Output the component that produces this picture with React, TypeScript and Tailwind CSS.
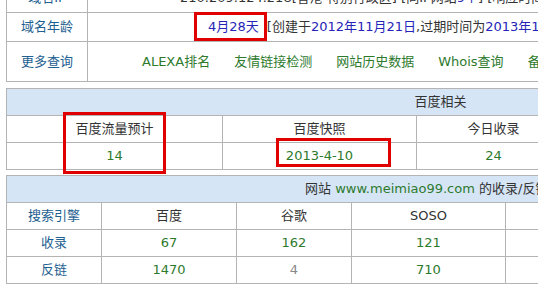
const line = 'border-[#b4b4b4]';

function Cell({ w, className = '', children }: { w?: string; className?: string; children?: React.ReactNode }) {
  return (
    <div className={`flex items-center justify-center whitespace-nowrap border-r border-[#b4b4b4] ${w ?? 'flex-1'} ${className}`}>
      {children}
    </div>
  );
}

function Label({ children }: { children: React.ReactNode }) {
  return <span className="text-[#1e6090]">{children}</span>;
}

function Green({ children }: { children: React.ReactNode }) {
  return <span className="text-[#2d7a2d]">{children}</span>;
}

function Blue({ children }: { children: React.ReactNode }) {
  return <span className="text-[#2525b8]">{children}</span>;
}

const links = ['ALEXA排名', '友情链接检测', '网站历史数据', 'Whois查询', '备案查询', 'PR查询'];

export default function App() {
  return (
    <div className="relative w-[538px] h-[284px] overflow-hidden bg-white text-[13px] leading-[16px] text-[#333] font-['DejaVu_Sans','Noto_Sans_CJK_SC',sans-serif]">
      <div className="-mt-[17px] ml-[6px] w-[869px]">
        {/* domain info */}
        <div className={`border-l border-t ${line}`}>
          <div className={`flex h-[29px] border-b ${line}`}>
            <Cell w="w-[81px]"><Label>域名IP</Label></Cell>
            <Cell className="!justify-start pl-[92px]">
              210.209.124.218[香港 特别行政区] [同IP网站<Blue>9个</Blue>] [响应时间:120ms]
            </Cell>
          </div>
          <div className={`flex h-[29px] border-b ${line}`}>
            <Cell w="w-[81px]"><Label>域名年龄</Label></Cell>
            <Cell className="!justify-start pl-[120px]">
              <Blue>4月28天</Blue>
              <span className="ml-[8px]">[创建于</span>
              <Blue>2012年11月21日</Blue>
              <span>,过期时间为</span>
              <Blue>2013年11月21日</Blue>
              <span>]</span>
            </Cell>
          </div>
          <div className={`flex h-[40px] border-b ${line}`}>
            <Cell w="w-[81px]"><Label>更多查询</Label></Cell>
            <Cell className="!justify-start gap-[24px] pl-[54px]">
              {links.map((l) => (
                <Green key={l}>{l}</Green>
              ))}
            </Cell>
          </div>
        </div>

        {/* baidu */}
        <div className={`mt-[6px] border-l border-t ${line}`}>
          <div className={`flex h-[27px] border-b bg-[#d5e5f6] ${line}`}>
            <Cell>百度相关</Cell>
          </div>
          <div className={`flex h-[27px] border-b ${line}`}>
            <Cell w="w-[216px]">百度流量预计</Cell>
            <Cell w="w-[194px]">百度快照</Cell>
            <Cell w="w-[154px]">今日收录</Cell>
            <Cell>本周收录</Cell>
          </div>
          <div className={`flex h-[27px] border-b ${line}`}>
            <Cell w="w-[216px]"><Green>14</Green></Cell>
            <Cell w="w-[194px]"><Green>2013-4-10</Green></Cell>
            <Cell w="w-[154px]"><Green>24</Green></Cell>
            <Cell><Green>168</Green></Cell>
          </div>
        </div>

        {/* index / backlinks */}
        <div className={`mt-[5px] border-l border-t ${line}`}>
          <div className={`flex h-[27px] border-b bg-[#d5e5f6] ${line}`}>
            <Cell className="!justify-start pl-[298px]">
              网站&nbsp;<Green>www.meimiao99.com</Green>&nbsp;的收录/反链结果
            </Cell>
          </div>
          <div className={`flex h-[27px] border-b ${line}`}>
            <Cell w="w-[95px]"><Label>搜索引擎</Label></Cell>
            <Cell w="w-[135px]">百度</Cell>
            <Cell w="w-[115px]">谷歌</Cell>
            <Cell w="w-[154px]">SOSO</Cell>
            <Cell w="w-[154px]">搜狗</Cell>
            <Cell>有道</Cell>
          </div>
          <div className={`flex h-[27px] border-b ${line}`}>
            <Cell w="w-[95px]"><Label>收录</Label></Cell>
            <Cell w="w-[135px]"><Green>67</Green></Cell>
            <Cell w="w-[115px]"><Green>162</Green></Cell>
            <Cell w="w-[154px]"><Green>121</Green></Cell>
            <Cell w="w-[154px]"><Green>88</Green></Cell>
            <Cell><Green>12</Green></Cell>
          </div>
          <div className={`flex h-[27px] border-b ${line}`}>
            <Cell w="w-[95px]"><Label>反链</Label></Cell>
            <Cell w="w-[135px]"><Green>1470</Green></Cell>
            <Cell w="w-[115px]"><span className="text-[#888]">4</span></Cell>
            <Cell w="w-[154px]"><Green>710</Green></Cell>
            <Cell w="w-[154px]"><Green>36</Green></Cell>
            <Cell><Green>5</Green></Cell>
          </div>
        </div>
      </div>

      {/* highlight boxes */}
      <div className="absolute left-[194px] top-[12px] w-[73px] h-[29px] border-[3px] border-[#e00000]" />
      <div className="absolute left-[63px] top-[112px] w-[103px] h-[62px] border-[3px] border-[#e00000]" />
      <div className="absolute left-[276px] top-[138px] w-[115px] h-[29px] border-[3px] border-[#e00000]" />
    </div>
  );
}
